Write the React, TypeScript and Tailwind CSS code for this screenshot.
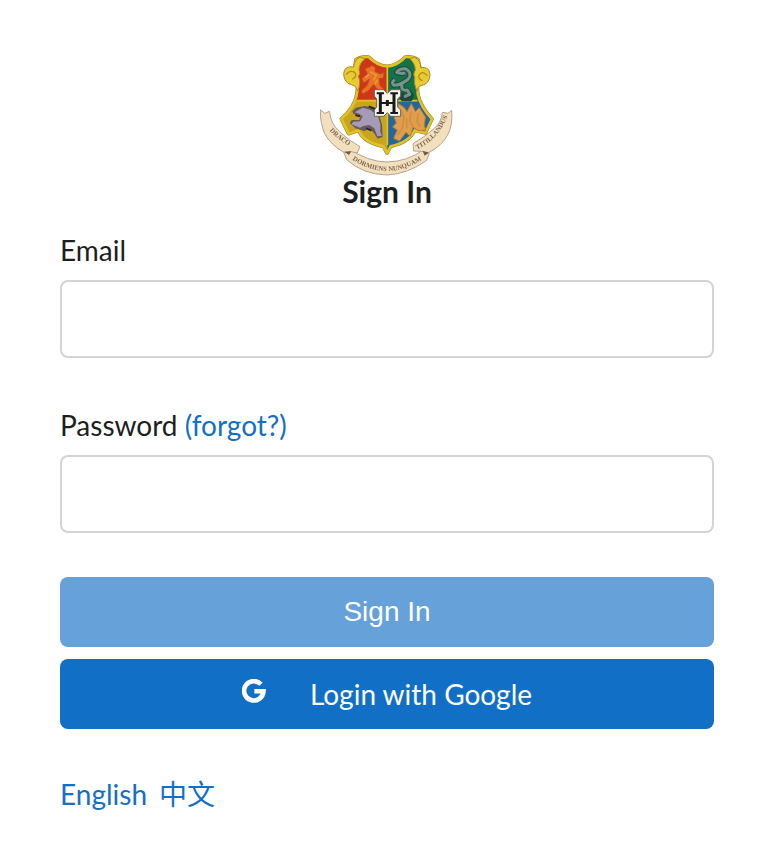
import { useState, type ReactNode } from "react";

const shieldPath =
  "M138 44 Q154 34 176 36 Q204 64 232 64 Q262 62 286 36 Q308 34 324 44 L330 70 Q318 110 324 150 Q332 186 366 222 L346 264 L314 256 Q298 292 242 304 L231 324 L220 304 Q160 292 146 256 L116 266 L94 222 Q134 186 140 150 Q148 110 134 70 Z";

function Crest() {
  return (
    <svg viewBox="30 30 402 363" className="w-[134px] h-[121px] blur-[0.6px]" role="img" aria-label="School crest">
      <defs>
        <clipPath id="shield">
          <path d={shieldPath} />
        </clipPath>
        <path id="motto-left" d="M54 250 Q82 287 140 314" />
        <path id="motto-middle" d="M110 333 Q172 378 231 378 Q290 378 352 333" />
        <path id="motto-right" d="M316 316 Q388 284 415 208" />
      </defs>

      {/* Ribbon */}
      <g fill="#f3dfbd" stroke="#b3a38d" strokeWidth="3" strokeLinejoin="round">
        <path d="M101 321 L116 310 Q172 350 231 351 Q292 350 344 312 L358 325 L350 346 Q294 387 231 390 Q158 388 110 344 Z" />
        <path d="M31 194 L44 205 L59 199 Q60 234 89 260 Q118 288 150 305 L142 324 L122 320 L102 322 Q62 300 44 266 Q30 234 31 194 Z" />
        <path d="M425 196 L414 205 L397 202 Q396 229 372 251 Q345 275 309 296 L311 318 L334 319 L356 323 Q396 301 412 272 Q429 242 425 196 Z" />
      </g>
      <g fill="#7a6750" fontSize="20" fontWeight="700" fontFamily="Liberation Serif, serif">
        <text>
          <textPath href="#motto-left" startOffset="8">
            DRACO
          </textPath>
        </text>
        <text textAnchor="middle">
          <textPath href="#motto-middle" startOffset="50%">
            DORMIENS NUNQUAM
          </textPath>
        </text>
        <text textAnchor="middle">
          <textPath href="#motto-right" startOffset="50%">
            TITILLANDUS
          </textPath>
        </text>
      </g>
      <path d="M103 320 L124 319 L117 330 Z M338 318 L357 323 L344 332 Z" fill="#6e5b48" />

      {/* Shield */}
      <path d={shieldPath} fill="#d9b51f" stroke="#9a8030" strokeWidth="11" strokeLinejoin="round" />
      <g clipPath="url(#shield)">
        <path d="M130 30 H232 V166 H130 Z" fill="#cf3519" />
        <path d="M232 30 H335 V166 H232 Z" fill="#137247" />
        <path d="M90 166 H232 V330 H90 Z" fill="#c9a51e" />
        <path d="M232 166 H370 V330 H232 Z" fill="#25679b" />
      </g>
      <path d={shieldPath} fill="none" stroke="#e0c126" strokeWidth="8" strokeLinejoin="round" />
      <path d="M232 66 V300 M142 167 H322" stroke="#e0c126" strokeWidth="5" />

      {/* Rolled corners */}
      <g fill="#e6cb32" stroke="#a98a22" strokeWidth="3" strokeLinejoin="round">
        <path d="M151 36 Q132 44 131 66 Q103 61 101 86 Q101 114 127 120 Q138 120 143 138 Q154 116 145 92 Q152 90 147 74 Q149 52 165 42 Z" />
        <path d="M313 36 Q333 46 332 68 Q358 63 360 88 Q360 116 334 122 Q324 122 321 140 Q310 116 314 95 Q308 90 316 75 Q315 55 300 42 Z" />
      </g>
      <g fill="none" stroke="#b08c1d" strokeWidth="4" strokeLinecap="round">
        <path d="M110 87 Q120 74 134 82 Q143 94 128 102" />
        <path d="M351 91 Q337 76 329 88 Q321 99 336 107" />
      </g>

      {/* Lion */}
      <path
        d="M178 66 Q185 57 196 66 L195 79 L212 87 L222 81 L221 99 L208 101 L210 121 L222 134 L205 135 L190 119 L177 136 L158 148 L154 137 L171 121 L178 103 L161 114 L155 101 L172 86 L164 71 Z"
        fill="#e77326"
        stroke="#c24a18"
        strokeWidth="3"
      />
      <path d="M180 80 L199 91 L190 106 M166 98 L178 88 M202 104 L195 117" stroke="#f0953a" strokeWidth="5" fill="none" />

      {/* Serpent */}
      <path
        d="M254 104 Q242 114 252 121 Q274 120 295 102 Q308 82 286 71 Q266 70 260 82 Q272 87 286 84 M276 118 Q272 139 292 135 L304 151 L301 161 H278 L275 144"
        fill="none"
        stroke="#1b4a3a"
        strokeWidth="15"
        strokeLinejoin="round"
      />
      <path
        d="M254 104 Q242 114 252 121 Q274 120 295 102 Q308 82 286 71 Q266 70 260 82 Q272 87 286 84 M276 118 Q272 139 292 135 L299 148 L282 156"
        fill="none"
        stroke="#76958a"
        strokeWidth="9"
        strokeLinejoin="round"
      />

      {/* Badger */}
      <path
        d="M138 188 L164 183 L190 188 L207 205 L216 240 L218 276 L203 281 L190 262 L172 250 L165 259 L136 250 L119 234 L125 225 L148 225 L152 210 L130 207 L127 198 Z"
        fill="#675b57"
      />
      <path
        d="M134 202 L158 188 L180 194 L203 211 L211 237 L211 260 L216 272 L202 274 L193 250 L178 240 L160 243 L150 248 L124 238 L130 230 L150 229 L158 214 L148 206 Z"
        fill="#a69ab9"
      />
      <path d="M136 210 L150 214 M168 250 L184 256 M176 184 L196 192" stroke="#2b2933" strokeWidth="6" fill="none" />

      {/* Eagle */}
      <path
        d="M266 176 L283 188 L291 200 L304 176 L316 200 L328 188 L346 216 L343 240 L347 256 L324 256 L309 247 L301 274 L288 262 L268 288 L251 280 L262 255 L248 246 L259 234 L252 215 Z"
        fill="#e09d4c"
        stroke="#bb7e3b"
        strokeWidth="3"
      />
      <path
        d="M271 195 L282 215 L278 246 L263 270 M303 199 L299 227 L309 244 M325 205 L321 229 L330 245 M289 219 L291 250"
        stroke="#cd8b44"
        strokeWidth="4"
        fill="none"
      />

      {/* Centre badge, built from strokes */}
      <path
        d="M193 134 H221 L232 145 L243 134 H272 V153 L263 162 V186 L272 195 V214 H242 L232 203 L221 214 H193 V195 L200 186 V162 L193 153 Z"
        fill="#f8f5e8"
        stroke="#69635a"
        strokeWidth="3"
      />
      <g stroke="#18191a" fill="none">
        <path d="M211 147 V202 M252 147 V202" strokeWidth="9" />
        <path d="M200 145 H222 M241 145 H264 M200 204 H222 M241 204 H264 M211 174 H252" strokeWidth="6" />
        <path d="M232 165 V183" strokeWidth="9" />
      </g>
    </svg>
  );
}

function GoogleIcon() {
  return (
    <svg viewBox="0 0 24 24" className="size-6" aria-hidden="true">
      <path d="M19 5.3 A9.7 9.7 0 1 0 21.5 12.2 H12.4" fill="none" stroke="currentColor" strokeWidth="4.6" />
    </svg>
  );
}

function TextLink({ children }: { children: ReactNode }) {
  return (
    <a href="#" className="text-[#1470c6] hover:underline">
      {children}
    </a>
  );
}

const inputClass =
  "block w-full h-[78px] rounded-lg border-2 border-[#d4d4d5] bg-white px-6 text-[28px] outline-none focus:border-[#85b7d9]";

export default function App() {
  const [email, setEmail] = useState("");
  const [password, setPassword] = useState("");

  return (
    <main className="min-h-screen bg-white pt-[55px] pb-9 pl-[60px] pr-[58px] font-['Lato','Noto_Sans_CJK_SC',sans-serif] text-[28px] leading-10 text-[#1d1e1f]">
      <header className="flex flex-col items-center">
        <Crest />
        <h1 className="text-[30px] leading-[30px] font-bold">Sign In</h1>
      </header>

      <form className="mt-6" onSubmit={(e) => e.preventDefault()}>
        <label htmlFor="email" className="block mb-2.5">
          Email
        </label>
        <input
          id="email"
          type="email"
          value={email}
          onChange={(e) => setEmail(e.target.value)}
          className={inputClass}
        />

        <div className="mt-[47px] mb-2.5">
          <label htmlFor="password">Password</label> <TextLink>(forgot?)</TextLink>
        </div>
        <input
          id="password"
          type="password"
          value={password}
          onChange={(e) => setPassword(e.target.value)}
          className={inputClass}
        />

        <div className="mt-11 flex flex-col gap-3 text-white">
          <button type="submit" className="h-[70px] rounded-lg bg-[#66a2d9] font-['Liberation_Sans',sans-serif]">
            Sign In
          </button>
          <button type="button" className="flex h-[70px] items-center justify-center gap-11 rounded-lg bg-[#1170c6]">
            <span className="pb-1.5">
              <GoogleIcon />
            </span>
            Login with Google
          </button>
        </div>
      </form>

      <nav className="mt-[45px] flex gap-3">
        <TextLink>English</TextLink>
        <TextLink>中文</TextLink>
      </nav>
    </main>
  );
}
